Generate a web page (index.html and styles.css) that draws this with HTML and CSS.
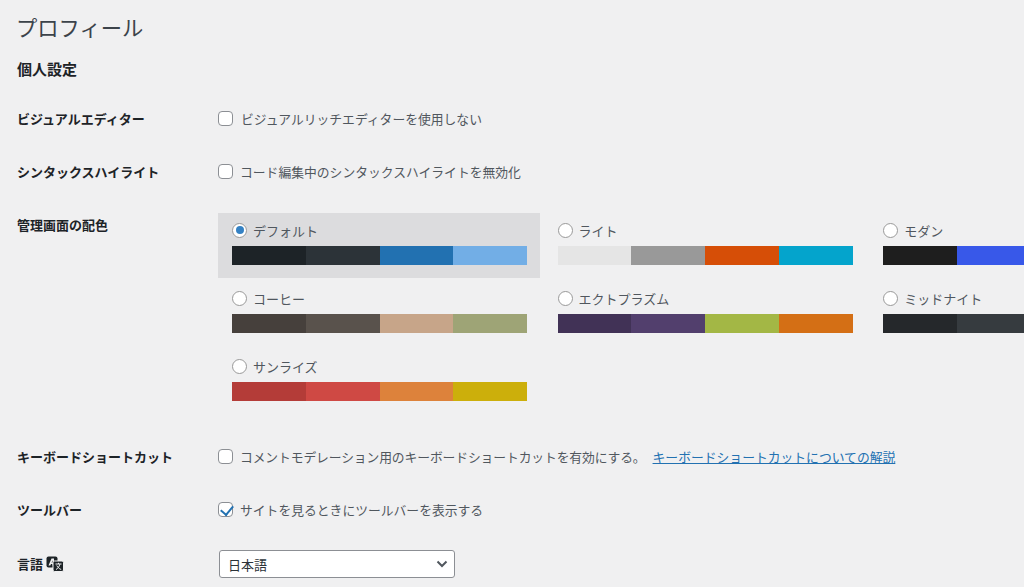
FILE: index.html
```html
<!DOCTYPE html>
<html lang="ja">
<head>
<meta charset="utf-8">
<title>プロフィール</title>
<link rel="stylesheet" href="styles.css">
</head>
<body>
<div class="wrap">
  <h1 class="title">プロフィール</h1>
  <h2 class="section">個人設定</h2>
  <div class="row row-editor">
    <div class="label">ビジュアルエディター</div>
    <label class="field"><input type="checkbox" class="check"><span class="wide">ビジュアルリッチエディターを使用しない</span></label>
  </div>
  <div class="row row-syntax">
    <div class="label">シンタックスハイライト</div>
    <label class="field"><input type="checkbox" class="check"><span>コード編集中のシンタックスハイライトを無効化</span></label>
  </div>
  <div class="row row-colors">
    <div class="label">管理画面の配色</div>
    <div class="schemes">
      <div class="scheme selected">
        <label class="scheme-name"><input type="radio" class="radio" name="c" checked><span>デフォルト</span></label>
        <div class="palette"><i class="c1a"></i><i class="c1b"></i><i class="c1c"></i><i class="c1d"></i></div>
      </div>
      <div class="scheme">
        <label class="scheme-name"><input type="radio" class="radio" name="c"><span>ライト</span></label>
        <div class="palette"><i class="c2a"></i><i class="c2b"></i><i class="c2c"></i><i class="c2d"></i></div>
      </div>
      <div class="scheme">
        <label class="scheme-name"><input type="radio" class="radio" name="c"><span>モダン</span></label>
        <div class="palette"><i class="c3a"></i><i class="c3b"></i><i class="c3c"></i><i class="c3d"></i></div>
      </div>
      <div class="scheme">
        <label class="scheme-name"><input type="radio" class="radio" name="c"><span>コーヒー</span></label>
        <div class="palette"><i class="c4a"></i><i class="c4b"></i><i class="c4c"></i><i class="c4d"></i></div>
      </div>
      <div class="scheme">
        <label class="scheme-name"><input type="radio" class="radio" name="c"><span>エクトプラズム</span></label>
        <div class="palette"><i class="c5a"></i><i class="c5b"></i><i class="c5c"></i><i class="c5d"></i></div>
      </div>
      <div class="scheme">
        <label class="scheme-name"><input type="radio" class="radio" name="c"><span>ミッドナイト</span></label>
        <div class="palette"><i class="c6a"></i><i class="c6b"></i><i class="c6c"></i><i class="c6d"></i></div>
      </div>
      <div class="scheme">
        <label class="scheme-name"><input type="radio" class="radio" name="c"><span>サンライズ</span></label>
        <div class="palette"><i class="c7a"></i><i class="c7b"></i><i class="c7c"></i><i class="c7d"></i></div>
      </div>
    </div>
  </div>
  <div class="row row-keys">
    <div class="label">キーボードショートカット</div>
    <label class="field"><input type="checkbox" class="check"><span class="keys-text">コメントモデレーション用のキーボードショートカットを有効にする。</span><a class="link" href="#">キーボードショートカットについての解説</a></label>
  </div>
  <div class="row row-toolbar">
    <div class="label">ツールバー</div>
    <label class="field"><input type="checkbox" class="check" checked><span>サイトを見るときにツールバーを表示する</span></label>
  </div>
  <div class="row row-lang">
    <div class="label lang-label">言語
      <svg class="lang-icon" viewBox="0 0 18 16" width="18" height="16"><rect x="0.500" y="0.500" width="11" height="11" rx="2" fill="#1d2327"/><path d="M2.500 9.500 5.500 2.500h2.500v7H6.500V8H5L4.300 9.500zM5.600 6.700h1V4.200z" fill="#f0f0f1" fill-rule="evenodd"/><rect x="7" y="5" width="10.500" height="10.500" rx="1.500" fill="#1d2327" stroke="#f0f0f1" stroke-width="1"/><path d="M9.500 8h6M12.500 6.800V8M10 13.500c2-1 3.300-2.800 3.800-5.300M10.800 9.500c1 2 2.300 3.200 4.400 4" stroke="#f0f0f1" stroke-width="1" fill="none"/></svg>
    </div>
    <div class="select">
      <span>日本語</span>
      <svg class="chev" viewBox="0 0 12 8" width="12" height="8"><path d="M1.500 1.500 6 6l4.500-4.500" fill="none" stroke="#50575e" stroke-width="2"/></svg>
    </div>
  </div>
</div>
</body>
</html>
```
FILE: styles.css
```css
* { box-sizing: border-box; }
html, body { margin: 0; height: 100%; overflow: hidden; }
body {
  background: #f0f0f1;
  color: #50575e;
  font-family: "Noto Sans CJK JP", "Noto Sans", sans-serif;
  font-size: 13px;
  line-height: 19px;
}
.wrap { width: 1400px; padding: 12px 0 0 17px; }
.title { margin: 0 0 0 -1px; font-size: 21.3px; line-height: 30px; font-weight: 400; color: #3c434a; }
.section { margin: 17px 0 0; font-size: 15px; line-height: 20px; font-weight: 700; color: #1d2327; }
.row { display: flex; align-items: flex-start; }
.label { width: 201px; flex: none; font-weight: 700; color: #1d2327; }
.row-editor { margin-top: 30px; }
.row-syntax { margin-top: 34px; }
.row-colors { margin-top: 34px; }
.row-keys { margin-top: 33px; }
.row-toolbar { margin-top: 34px; }
.row-lang { margin-top: 34px; }
.field { display: flex; align-items: center; color: #50575e; font-size: 12.8px; }
.wide { margin-left: 1px; }
.keys-text { letter-spacing: -0.12px; }
.check, .radio {
  appearance: none;
  flex: none;
  width: 15px;
  height: 15px;
  margin: 0 7px 0 0;
  background: #fff;
  border: 1px solid #8c8f94;
  position: relative;
}
.check { border-radius: 4px; }
.check:checked::after {
  content: "";
  position: absolute;
  left: 4px;
  top: 0;
  width: 6px;
  height: 10px;
  border: solid #2271b1;
  border-width: 0 2px 2px 0;
  transform: rotate(40deg);
}
.radio { border-radius: 50%; margin-right: 6px; border-color: #999; }
.radio:checked::after {
  content: "";
  position: absolute;
  left: 2.5px;
  top: 2.5px;
  width: 8px;
  height: 8px;
  border-radius: 50%;
  background: #3582c4;
}
.link { margin-left: 7px; color: #2271b1; text-decoration: underline; }
.schemes { display: grid; grid-template-columns: repeat(3, 322px); column-gap: 3.6px; row-gap: 3px; margin-top: -2px; }
.scheme { height: 65px; padding: 7px 14px 0; }
.selected { background: #dcdcde; }
.scheme-name { display: flex; align-items: center; height: 20px; }
.palette { display: flex; width: 295px; height: 19px; margin-top: 6px; }
.palette i { flex: 1; display: block; }
.c1a { background: #1d2327; } .c1b { background: #2c3338; } .c1c { background: #2271b1; } .c1d { background: #72aee6; }
.c2a { background: #e5e5e5; } .c2b { background: #999; } .c2c { background: #d64e07; } .c2d { background: #04a4cc; }
.c3a { background: #1e1e1e; } .c3b { background: #3858e9; } .c3c { background: #33f078; } .c3d { background: #33f078; }
.c4a { background: #46403c; } .c4b { background: #59524c; } .c4c { background: #c7a589; } .c4d { background: #9ea476; }
.c5a { background: #413256; } .c5b { background: #523f6d; } .c5c { background: #a3b745; } .c5d { background: #d46f15; }
.c6a { background: #25282b; } .c6b { background: #363b3f; } .c6c { background: #69a8bb; } .c6d { background: #e14d43; }
.c7a { background: #b43c38; } .c7b { background: #cf4944; } .c7c { background: #dd823b; } .c7d { background: #ccaf0b; }
.lang-label { display: flex; align-items: center; gap: 3px; height: 20px; }
.lang-icon { flex: none; margin-top: 2px; }
.select {
  display: flex;
  align-items: center;
  justify-content: space-between;
  width: 236px;
  height: 28px;
  margin: -3px 0 0 1px;
  padding: 0 6px 0 8px;
  background: #fff;
  border: 1px solid #8c8f94;
  border-radius: 3px;
  color: #2c3338;
  font-size: 13px;
}
```
